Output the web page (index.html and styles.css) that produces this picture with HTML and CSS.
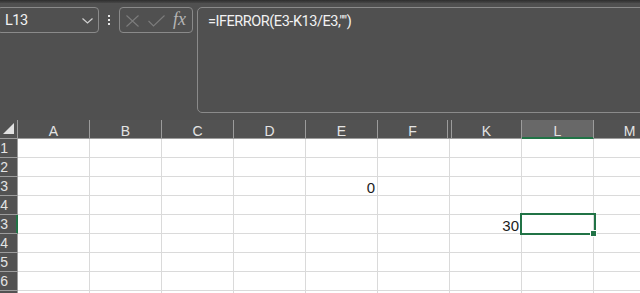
FILE: index.html
```html
<!DOCTYPE html>
<html lang="en">
<head>
    <meta charset='utf-8'>
    <title>Book1 - Excel</title>
    <link rel="stylesheet" href="styles.css">
</head>
<body>
    <div class="topline"></div>
    <div class="fbar">
        <div class="namebox">
            <span class="ref">L13</span>
            <svg class="chev" width="11" height="6" viewBox="0 0 11 6"><path d="M0.5 0.5 L5.5 5 L10.5 0.5" fill="none" stroke="#d0d0d0" stroke-width="1.2"/></svg>
        </div>
        <div class="kebab"><i></i><i></i><i></i></div>
        <div class="fxbox">
            <svg width="13" height="12" viewBox="0 0 13 12"><path d="M0.5 0.5 L12.5 11.5 M12.5 0.5 L0.5 11.5" stroke="#7c7c7c" stroke-width="1.1" fill="none"/></svg>
            <svg width="17" height="12" viewBox="0 0 17 12"><path d="M0.5 6 L5.5 11 L16.5 0.5" stroke="#7c7c7c" stroke-width="1.1" fill="none"/></svg>
            <span class="fx">fx</span>
        </div>
        <div class="formula">=IFERROR(E3-K13/E3,"")</div>
    </div>

    <div class="sheet">
        <div class="row hdr">
            <div class="corner"><svg width="12" height="12" viewBox="0 0 12 12"><path d="M11 0 L11 11 L0 11 Z" fill="#e2e2e2"/></svg></div>
            <div class="ch">A</div>
            <div class="ch">B</div>
            <div class="ch">C</div>
            <div class="ch">D</div>
            <div class="ch">E</div>
            <div class="ch chf">F</div>
            <div class="hidden-gap"></div>
            <div class="ch chk">K</div>
            <div class="ch sel">L</div>
            <div class="ch">M</div>
        </div>
        <div class="row"><div class="rh"><span>1</span></div><div class="c"></div><div class="c"></div><div class="c"></div><div class="c"></div><div class="c"></div><div class="c"></div><div class="c"></div><div class="c"></div><div class="c"></div></div>
        <div class="row"><div class="rh"><span>2</span></div><div class="c"></div><div class="c"></div><div class="c"></div><div class="c"></div><div class="c"></div><div class="c"></div><div class="c"></div><div class="c"></div><div class="c"></div></div>
        <div class="row"><div class="rh"><span>3</span></div><div class="c"></div><div class="c"></div><div class="c"></div><div class="c"></div><div class="c num">0</div><div class="c"></div><div class="c"></div><div class="c"></div><div class="c"></div></div>
        <div class="row"><div class="rh"><span>4</span></div><div class="c"></div><div class="c"></div><div class="c"></div><div class="c"></div><div class="c"></div><div class="c"></div><div class="c"></div><div class="c"></div><div class="c"></div></div>
        <div class="row"><div class="rh rsel"><span>13</span></div><div class="c"></div><div class="c"></div><div class="c"></div><div class="c"></div><div class="c"></div><div class="c"></div><div class="c num">30</div><div class="c active"><div class="selbox"></div><div class="handle"></div></div><div class="c"></div></div>
        <div class="row"><div class="rh"><span>14</span></div><div class="c"></div><div class="c"></div><div class="c"></div><div class="c"></div><div class="c"></div><div class="c"></div><div class="c"></div><div class="c"></div><div class="c"></div></div>
        <div class="row"><div class="rh"><span>15</span></div><div class="c"></div><div class="c"></div><div class="c"></div><div class="c"></div><div class="c"></div><div class="c"></div><div class="c"></div><div class="c"></div><div class="c"></div></div>
        <div class="row"><div class="rh"><span>16</span></div><div class="c"></div><div class="c"></div><div class="c"></div><div class="c"></div><div class="c"></div><div class="c"></div><div class="c"></div><div class="c"></div><div class="c"></div></div>
        <div class="row"><div class="rh"><span>17</span></div><div class="c"></div><div class="c"></div><div class="c"></div><div class="c"></div><div class="c"></div><div class="c"></div><div class="c"></div><div class="c"></div><div class="c"></div></div>
    </div>
</body>
</html>
```

FILE: styles.css
```css
html,
body {
    margin: 0;
    padding: 0;
    overflow: hidden;
}

body {
    background-color: #505050;
    font-family: "Liberation Sans", Arial, sans-serif;
    width: 640px;
    height: 293px;
}

.topline {
    height: 3px;
    background: linear-gradient(#2e2e2e, #474747);
}

/* formula bar */
.fbar {
    display: flex;
    align-items: flex-start;
    padding-top: 4px;
    height: 106px;
}

.namebox {
    box-sizing: border-box;
    width: 102px;
    height: 26px;
    margin-left: -3px;
    border: 1px solid #8a8a8a;
    border-radius: 4px;
    display: flex;
    align-items: center;
    justify-content: space-between;
    padding: 0 5px 0 7px;
}

.ref,
.formula {
    font-family: "Roboto", "Liberation Sans", sans-serif;
    font-size: 14.5px;
    letter-spacing: -0.45px;
    color: #f2f2f2;
}

.ref {
    line-height: 20px;
    padding-top: 1px;
}

.chev {
    margin-top: 1px;
}

.kebab {
    width: 20px;
    height: 26px;
    display: flex;
    flex-direction: column;
    align-items: center;
    padding-top: 8px;
    box-sizing: border-box;
    gap: 2px;
}

.kebab i {
    display: block;
    width: 2px;
    height: 2px;
    background-color: #e6e6e6;
}

.fxbox {
    box-sizing: border-box;
    width: 74px;
    height: 26px;
    border: 1px solid #8a8a8a;
    border-radius: 4px;
    display: flex;
    align-items: center;
    padding: 1px 0 0 6px;
    gap: 9px;
}

.fx {
    font-family: "Liberation Serif", "DejaVu Serif", serif;
    font-style: italic;
    font-size: 18px;
    color: #b5b5b5;
    margin-left: -1px;
    margin-top: -2px;
}

.formula {
    flex: 1;
    box-sizing: border-box;
    height: 106px;
    margin-left: 4px;
    margin-right: -10px;
    border: 1px solid #8a8a8a;
    border-radius: 5px;
    padding: 4px 10px;
    line-height: 20px;
}

/* grid */
.sheet {
    margin-top: 7px;
    width: 700px;
}

.row {
    display: flex;
    height: 19px;
    box-sizing: border-box;
}

.hdr {
    background-color: #525252;
    border-bottom: 1px solid #9c9c9c;
}

.corner {
    width: 18px;
    box-sizing: border-box;
    border-right: 1px solid #9c9c9c;
    display: flex;
    align-items: flex-end;
    padding: 0 0 3px 3px;
}

.ch {
    box-sizing: border-box;
    width: 72px;
    flex: none;
    border-right: 1px solid #9c9c9c;
    text-align: center;
    color: #e4e4e4;
    font-size: 14px;
    line-height: 16px;
    padding-top: 3px;
}

.chf {
    width: 70px;
}

.hidden-gap {
    width: 3px;
    flex: none;
}

.chk {
    width: 71px;
    border-left: 1px solid #9c9c9c;
}

.ch.sel {
    background-color: #686868;
    box-shadow: inset 0 -1px 0 #217346;
    margin-bottom: -1px;
    border-bottom: 1px solid #217346;
}

.rh {
    box-sizing: border-box;
    width: 18px;
    flex: none;
    background-color: #525252;
    border-right: 1px solid #9c9c9c;
    border-bottom: 1px solid #9c9c9c;
    display: flex;
    justify-content: flex-end;
    padding-right: 9px;
    overflow: hidden;
    color: #e4e4e4;
    font-size: 14px;
    line-height: 17px;
    padding-top: 1px;
    white-space: nowrap;
}

.rh.rsel {
    border-right-color: #217346;
    box-shadow: inset -1px 0 0 #217346;
}

.c {
    box-sizing: border-box;
    width: 72px;
    flex: none;
    background-color: #fff;
    border-right: 1px solid #dadada;
    border-bottom: 1px solid #dadada;
}

.num {
    text-align: right;
    padding: 2px 2px 0 0;
    font-size: 15px;
    line-height: 17px;
    color: #1c1c1c;
}

.active {
    position: relative;
}

.selbox {
    position: absolute;
    left: -2px;
    top: -2px;
    width: 76px;
    height: 22px;
    box-sizing: border-box;
    border: 2px solid #217346;
    z-index: 2;
}

.handle {
    position: absolute;
    left: 69px;
    top: 16px;
    width: 5px;
    height: 5px;
    background-color: #217346;
    outline: 1px solid #fff;
    z-index: 3;
}
```
